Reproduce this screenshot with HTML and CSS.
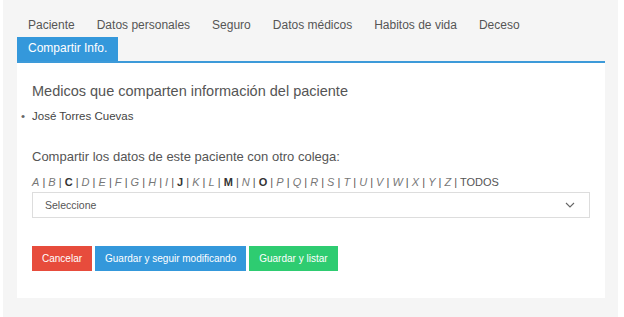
FILE: index.html
```html
<!DOCTYPE html>
<html lang="es">
<head>
    <meta charset="UTF-8">
    <title>Compartir Info.</title>
    <link rel="stylesheet" href="styles.css">
</head>
<body>
    <div class="panel">
        <ul class="tabs">
            <li><a href="#">Paciente</a></li>
            <li><a href="#">Datos personales</a></li>
            <li><a href="#">Seguro</a></li>
            <li><a href="#">Datos médicos</a></li>
            <li><a href="#">Habitos de vida</a></li>
            <li><a href="#">Deceso</a></li>
            <li class="active"><a href="#">Compartir Info.</a></li>
        </ul>

        <div class="tab-content">
            <h3 class="section-title">Medicos que comparten información del paciente</h3>
            <ul class="doctor-list">
                <li>José Torres Cuevas</li>
            </ul>

            <h4 class="share-title">Compartir los datos de este paciente con otro colega:</h4>
            <div class="letters" id="letters"></div>

            <div class="select-box">
                <span>Seleccione</span>
                <svg class="chevron" width="10" height="6" viewBox="0 0 10 6">
                    <path d="M1 1l4 4 4-4" fill="none" stroke="#666" stroke-width="1.1"/>
                </svg>
            </div>

            <div class="actions">
                <button class="btn btn-red">Cancelar</button>
                <button class="btn btn-blue">Guardar y seguir modificando</button>
                <button class="btn btn-green">Guardar y listar</button>
            </div>
        </div>
    </div>

    <script>
        // letras con colegas disponibles en negrita, el resto en cursiva
        const withDoctors = ['C', 'J', 'M', 'O'];
        const letters = document.getElementById('letters');
        'ABCDEFGHIJKLMNOPQRSTUVWXYZ'.split('').forEach(l => {
            const a = document.createElement('a');
            a.href = '#';
            a.textContent = l;
            a.className = withDoctors.includes(l) ? 'on' : 'off';
            letters.appendChild(a);
            letters.appendChild(document.createTextNode(' | '));
        });
        const all = document.createElement('a');
        all.href = '#';
        all.textContent = 'TODOS';
        all.className = 'all';
        letters.appendChild(all);
    </script>
</body>
</html>
```

FILE: styles.css
```css
body {
    margin: 0;
    background: #fff;
    font-family: "Liberation Sans", Arial, sans-serif;
    color: #555;
}

.panel {
    margin-left: 3px;
    width: 588px;
    height: 297px;
    padding: 13px 13px 13px 14px;
    background: #f5f5f5;
}

.tabs {
    list-style: none;
    margin: 0;
    padding: 0;
    display: flex;
    flex-wrap: wrap;
    border-bottom: 2px solid #3d9ad9;
}

.tabs li a {
    display: block;
    height: 24px;
    line-height: 25px;
    padding: 0 11px;
    font-size: 12px;
    color: #555;
    text-decoration: none;
}

.tabs li.active a {
    background: #3498db;
    color: #fff;
    line-height: 23px;
}

.tab-content {
    background: #fff;
    height: 235px;
    padding: 0 15px;
    display: flex;
    flex-direction: column;
}

.section-title {
    margin: 18px 0 0;
    font-size: 14.5px;
    font-weight: normal;
    line-height: 20px;
    color: #555;
}

.doctor-list {
    margin: 7px 0 0;
    padding-left: 0;
    list-style: none;
    font-size: 11.5px;
    line-height: 16px;
    color: #444;
}

.doctor-list li::before {
    content: "•";
    display: inline-block;
    width: 11px;
    margin-left: -11px;
    color: #666;
}

.share-title {
    margin: 24px 0 0;
    font-size: 13px;
    font-weight: normal;
    line-height: 18px;
    color: #555;
}

.letters {
    margin-top: 9px;
    font-size: 11px;
    line-height: 14px;
    color: #555;
    white-space: nowrap;
}

.letters a {
    text-decoration: none;
}

.letters a.off {
    font-style: italic;
    color: #777;
}

.letters a.on {
    font-weight: bold;
    color: #333;
}

.letters a.all {
    color: #555;
}

.select-box {
    margin-top: 3px;
    height: 24px;
    border: 1px solid #ddd;
    display: flex;
    align-items: center;
    justify-content: space-between;
    padding: 0 12px;
    font-size: 10.5px;
    color: #555;
}

.chevron {
    margin-right: 2px;
}

.actions {
    margin-top: 28px;
    display: flex;
    gap: 3px;
}

.btn {
    height: 25px;
    border: none;
    padding: 0 10px;
    font-family: inherit;
    font-size: 10px;
    color: #fff;
    cursor: pointer;
}

.btn-red {
    background: #e74c3c;
}

.btn-blue {
    background: #3498db;
}

.btn-green {
    background: #2ecc71;
}
```
